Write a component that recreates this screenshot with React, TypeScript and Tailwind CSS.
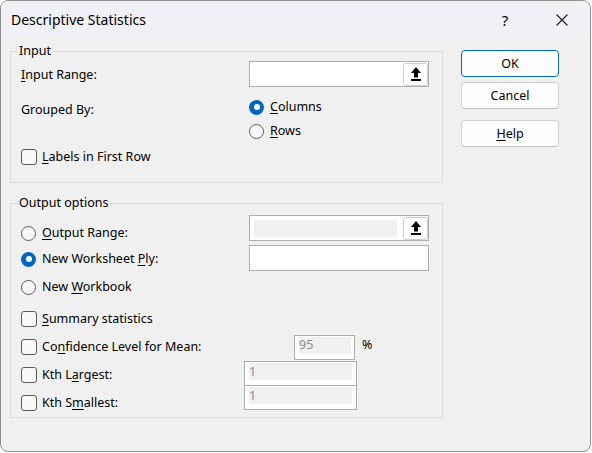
import React from "react";

function U({ children }: { children: React.ReactNode }) {
  return <span className="underline decoration-1 underline-offset-[2px]">{children}</span>;
}

function Radio({ checked }: { checked?: boolean }) {
  return checked ? (
    <span className="flex h-[15px] w-[15px] shrink-0 items-center justify-center rounded-full bg-[#0067c0]">
      <span className="h-[6px] w-[6px] rounded-full bg-white" />
    </span>
  ) : (
    <span className="h-[15px] w-[15px] shrink-0 rounded-full border border-[#5c5c5c] bg-[#f7f7f7]" />
  );
}

function Check() {
  return <span className="h-[16px] w-[16px] shrink-0 rounded-[3px] border border-[#5c5c5c] bg-[#f7f7f7]" />;
}

function PickBtn() {
  return (
    <span className="flex h-[23px] w-[25px] shrink-0 items-center justify-center rounded-[3px] border border-[#cdcdcd] bg-white">
      <svg width="10" height="14" viewBox="0 0 10 14">
        <path d="M5 0L10 6H7V10.5H3V6H0Z" fill="#000" />
        <rect x="0" y="12" width="10" height="2" fill="#000" />
      </svg>
    </span>
  );
}

function Btn({ children, primary }: { children: React.ReactNode; primary?: boolean }) {
  return (
    <div
      className={
        primary
          ? "flex h-[27px] w-[98px] items-center justify-center rounded-[4px] border border-[#0067c0] bg-[#fdfdfd]"
          : "flex h-[27px] w-[98px] items-center justify-center rounded-[4px] border border-[#d0d0d0] border-b-[#bdbdbd] bg-[#fdfdfd]"
      }
    >
      {children}
    </div>
  );
}

export default function App() {
  return (
    <div className="h-[453px] w-[592px] bg-white font-['Segoe_UI','Noto_Sans',sans-serif] text-[12.5px] leading-[14px] text-black">
      <div className="flex h-[452px] w-[591px] flex-col overflow-hidden rounded-[8px] border border-[#8f8f8f] bg-[#f0f0f0]">
        {/* Title bar */}
        <div className="flex h-[36px] shrink-0 items-center bg-[#f0f1f6] pl-[10px] pt-[1px]">
          <span className="text-[14px] leading-[18px]">Descriptive Statistics</span>
          <div className="ml-auto flex items-center">
            <span className="flex w-[46px] justify-center text-[15px] leading-[18px]">?</span>
            <span className="ml-[11px] mr-[5px] flex w-[46px] justify-center">
              <svg width="12" height="12" viewBox="0 0 12 12">
                <path d="M0.5 0.5L11.5 11.5M11.5 0.5L0.5 11.5" stroke="#1a1a1a" strokeWidth="1.1" />
              </svg>
            </span>
          </div>
        </div>

        {/* Body */}
        <div className="flex pl-[9px]">
          <div className="flex w-[433px] flex-col pt-[7px]">
            {/* Input group */}
            <fieldset className="border border-[#dcdcdc]">
              <legend className="ml-[7px] px-[1px] leading-[14px]">Input</legend>
              <div className="flex flex-col pb-[13px] pl-[10px] pr-[13px]">
                <div className="mt-[3px] flex h-[26px] items-center">
                  <span className="w-[228px] pt-[2px]">
                    <U>I</U>nput Range:
                  </span>
                  <div className="flex h-[26px] w-[180px] items-center justify-end border border-[#adadad] bg-white">
                    <PickBtn />
                  </div>
                </div>
                <div className="mt-[8px] flex">
                  <span className="w-[228px] pt-[8px]">Grouped By:</span>
                  <div className="flex flex-col">
                    <div className="flex h-[24px] items-center gap-[6px]">
                      <Radio checked />
                      <span>
                        <U>C</U>olumns
                      </span>
                    </div>
                    <div className="flex h-[24px] items-center gap-[6px]">
                      <Radio />
                      <span>
                        <U>R</U>ows
                      </span>
                    </div>
                  </div>
                </div>
                <div className="mt-[2px] flex h-[24px] items-center gap-[5px]">
                  <Check />
                  <span>
                    <U>L</U>abels in First Row
                  </span>
                </div>
              </div>
            </fieldset>

            {/* Output group */}
            <fieldset className="mt-[13px] border border-[#dcdcdc]">
              <legend className="ml-[7px] px-[1px] leading-[14px]">Output options</legend>
              <div className="flex flex-col pb-[1px] pl-[10px] pr-[13px]">
                <div className="flex">
                  <div className="flex w-[228px] flex-col pt-[10px]">
                    <div className="flex h-[26px] items-center gap-[6px]">
                      <Radio />
                      <span>
                        <U>O</U>utput Range:
                      </span>
                    </div>
                    <div className="flex h-[26px] items-center gap-[6px]">
                      <Radio checked />
                      <span>
                        New Worksheet <U>P</U>ly:
                      </span>
                    </div>
                    <div className="flex h-[30px] items-center gap-[6px]">
                      <Radio />
                      <span>
                        New <U>W</U>orkbook
                      </span>
                    </div>
                  </div>
                  <div className="flex flex-col gap-[4px] pt-[5px]">
                    <div className="flex h-[26px] w-[180px] items-center border border-[#adadad] bg-white pl-[4px]">
                      <span className="mr-[6px] h-[17px] flex-1 bg-[#f0f0f0]" />
                      <PickBtn />
                    </div>
                    <div className="h-[26px] w-[180px] border border-[#adadad] bg-white" />
                  </div>
                </div>

                <div className="mt-[3px] flex h-[28px] items-center gap-[5px]">
                  <Check />
                  <span>
                    <U>S</U>ummary statistics
                  </span>
                </div>
                <div className="flex h-[28px] items-center">
                  <div className="flex w-[273px] items-center gap-[5px]">
                    <Check />
                    <span>
                      Co<U>n</U>fidence Level for Mean:
                    </span>
                  </div>
                  <div className="flex h-[25px] w-[61px] items-start border border-[#adadad] bg-white pl-[4px] pr-[3px] pt-[1px]">
                    <span className="flex h-[17px] flex-1 items-center bg-[#f0f0f0] text-[#8c8c8c]">95</span>
                  </div>
                  <span className="ml-[7px] -mt-[4px]">%</span>
                </div>
                <div className="flex items-start">
                  <div className="flex w-[223px] flex-col">
                    <div className="flex h-[28px] items-center gap-[5px]">
                      <Check />
                      <span>
                        Kth L<U>a</U>rgest:
                      </span>
                    </div>
                    <div className="flex h-[27px] items-center gap-[5px]">
                      <Check />
                      <span>
                        Kth S<U>m</U>allest:
                      </span>
                    </div>
                  </div>
                  <div className="flex w-[113px] flex-col border border-[#adadad] bg-white">
                    <div className="flex h-[24px] items-start border-b border-[#adadad] pl-[4px] pr-[4px] pt-[1px]">
                      <span className="flex h-[17px] flex-1 items-center bg-[#f0f0f0] text-[#8c8c8c]">1</span>
                    </div>
                    <div className="flex h-[23px] items-start pl-[4px] pr-[4px] pt-[1px]">
                      <span className="flex h-[17px] flex-1 items-center bg-[#f0f0f0] text-[#8c8c8c]">1</span>
                    </div>
                  </div>
                </div>
              </div>
            </fieldset>
          </div>

          {/* Buttons */}
          <div className="ml-[18px] flex flex-col pt-[13px]">
            <Btn primary>OK</Btn>
            <div className="mt-[5px]">
              <Btn>Cancel</Btn>
            </div>
            <div className="mt-[11px]">
              <Btn>
                <span>
                  <U>H</U>elp
                </span>
              </Btn>
            </div>
          </div>
        </div>
      </div>
    </div>
  );
}
